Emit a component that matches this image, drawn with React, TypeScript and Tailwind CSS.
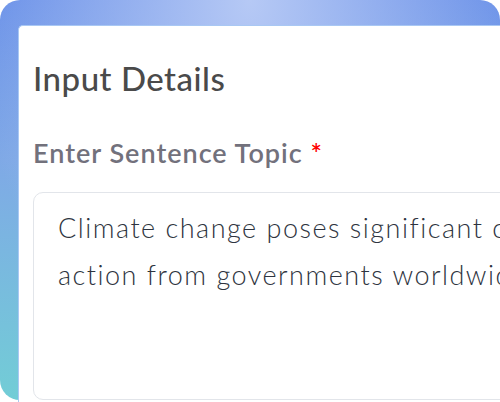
import React from "react";

export default function App() {
  return (
    <div className="w-[500px] h-[402px] overflow-hidden bg-white">
      <div className="w-[500px] h-[400px] rounded-[20px] pt-[25px] pl-[18px] bg-[radial-gradient(ellipse_55%_100%_at_50%_0%,rgba(182,201,245,1),rgba(182,201,245,0)_100%),linear-gradient(to_bottom,#6990e8_0%,#7fa9e6_40%,#72cdd6_100%)]">
        <div className="w-[540px] h-[420px] bg-white rounded-tl-[5px] border-t border-l border-[#a9c8f3] pl-[14px] pt-[32px]">
          <h1 className="text-[33px] leading-[40px] font-medium text-[#4a4a4a] font-['Lato',sans-serif] tracking-[0.5px]">
            Input Details
          </h1>
          <div className="mt-[39px] text-[27px] leading-[32px] font-semibold text-[#72717c] font-['Lato',sans-serif] tracking-[1px]">
            Enter Sentence Topic <span className="text-[#f00]">*</span>
          </div>
          <div className="mt-[23px] w-[520px] h-[208px] rounded-[10px] border border-[#e2e5ea] pl-[24px] pt-[11px] font-['Lato',sans-serif] text-[27px] leading-[47px] text-[#2e3440] font-light tracking-[1.5px] whitespace-nowrap overflow-hidden">
            <div>Climate change poses significant challenges requiring</div>
            <div>action from governments worldwide and individuals</div>
          </div>
        </div>
      </div>
    </div>
  );
}
